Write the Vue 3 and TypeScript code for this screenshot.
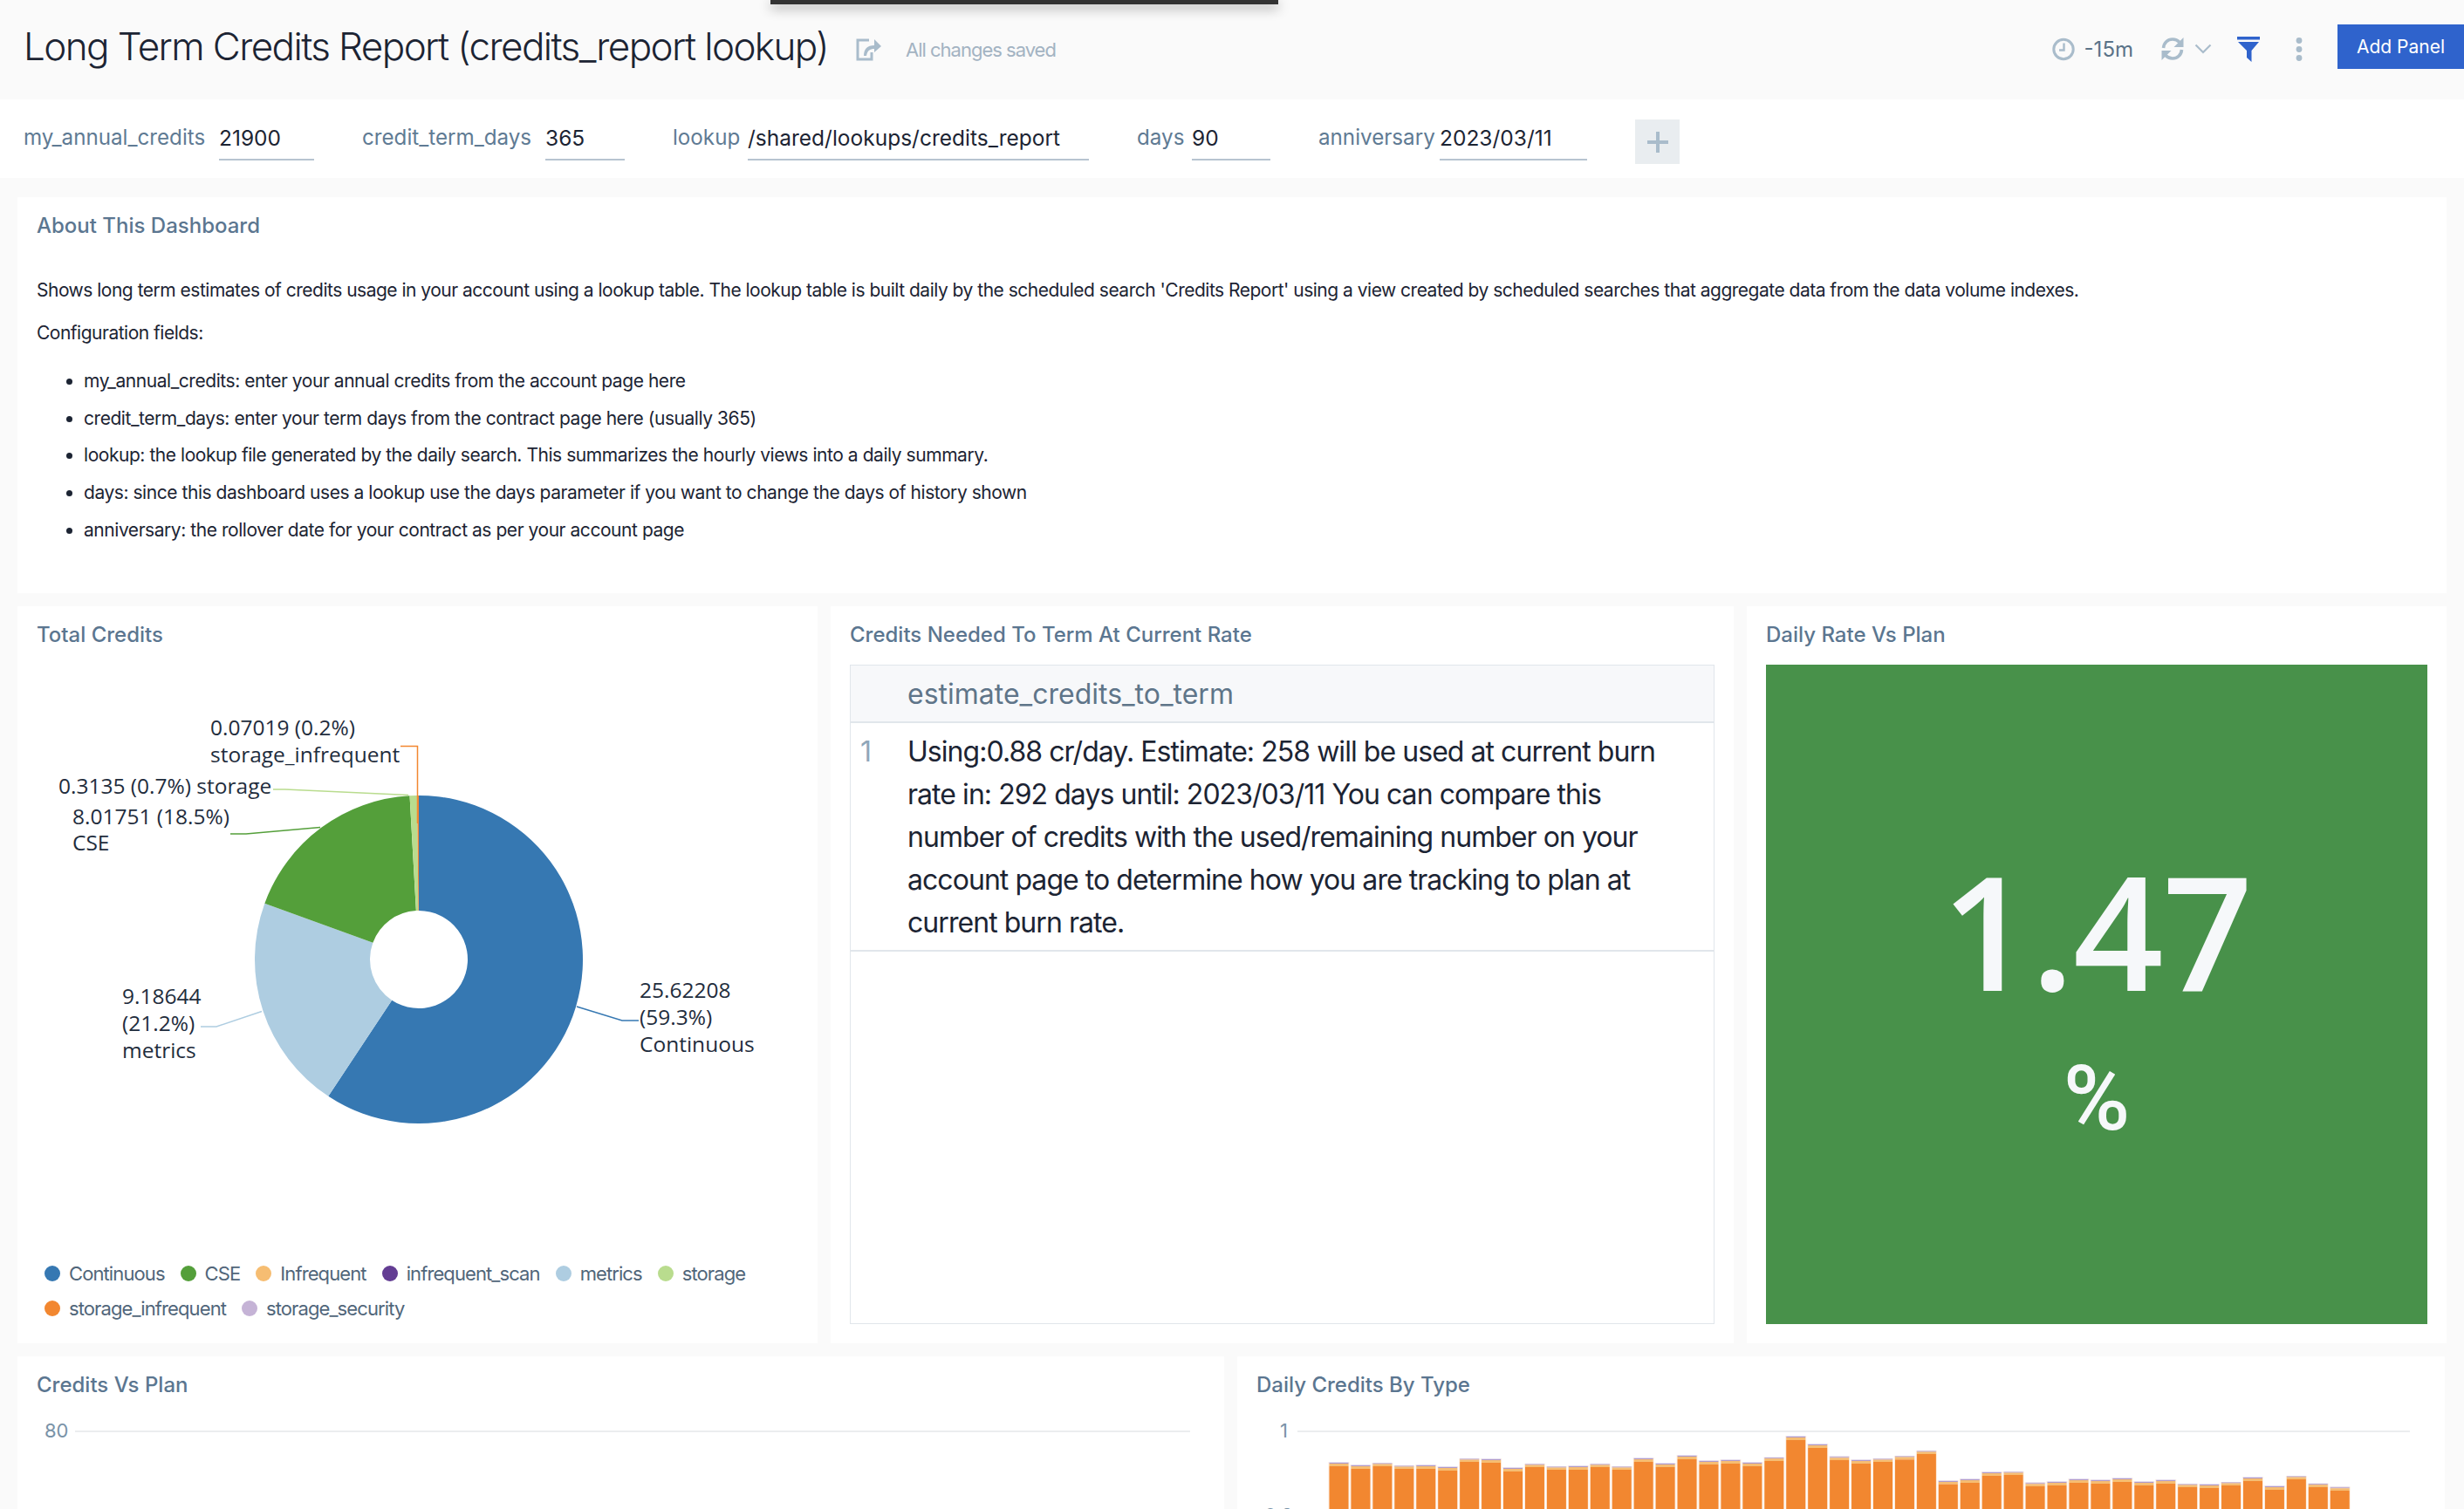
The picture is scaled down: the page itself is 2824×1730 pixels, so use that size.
<template>
  <div class="page">
    <div class="top-sheet"></div>
    <header class="head">
      <h1 class="title">Long Term Credits Report (credits_report lookup)</h1>
      <svg class="share" width="30" height="26" viewBox="0 0 30 26">
        <path d="M15 2H2v22h16v-8" fill="none" stroke="#a9bccb" stroke-width="3" />
        <path d="M9 20c0-8 4-12 12-12V1l8 8-8 7v-4c-5 0-8 2-9 8z" fill="#a9bccb" />
      </svg>
      <span class="saved">All changes saved</span>
      <div class="head-right">
        <svg class="ico" width="26" height="27" viewBox="0 0 26 27">
          <circle cx="13" cy="13.5" r="11.2" fill="none" stroke="#a9bccb" stroke-width="3" />
          <path d="M13.5 6.5v8H8" fill="none" stroke="#a9bccb" stroke-width="2.4" />
        </svg>
        <span class="range">-15m</span>
        <svg class="ico refresh" width="26" height="28" viewBox="0 0 26 28">
          <path d="M2.5 13C3 7 7.5 3 13 3c3.400 0 6 1.300 8 3.500" fill="none" stroke="#a9bccb" stroke-width="3.600" />
          <path d="M25.500 1v11h-11z" fill="#a9bccb" />
          <path d="M23.500 15c-.5 6-5 10-10.500 10-3.400 0-6-1.300-8-3.500" fill="none" stroke="#a9bccb" stroke-width="3.600" />
          <path d="M.5 27V16h11z" fill="#a9bccb" />
        </svg>
        <svg class="ico chev" width="20" height="12" viewBox="0 0 20 12">
          <path d="M1.500 1.500 10 10l8.500-8.500" fill="none" stroke="#a9bccb" stroke-width="2.200" />
        </svg>
        <svg class="ico funnel" width="26" height="29" viewBox="0 0 26 29">
          <path d="M0 0h26v3.500H0z" fill="#2f63cc" />
          <path d="M1 6h24l-8.500 10v13L11 24v-8z" fill="#2f63cc" />
        </svg>
        <svg class="ico dots" width="8" height="27" viewBox="0 0 8 27">
          <circle cx="4" cy="3.500" r="3.400" fill="#a9bccb" />
          <circle cx="4" cy="13.500" r="3.400" fill="#a9bccb" />
          <circle cx="4" cy="23.500" r="3.400" fill="#a9bccb" />
        </svg>
        <button type="button" class="add-btn">Add Panel</button>
      </div>
    </header>

    <div class="params">
      <label v-for="p in params" :key="p.name" class="param">
        <span class="param-name" :style="{ width: p.nameWidth + 'px' }">{{ p.name }}</span>
        <input class="param-input" :style="{ width: p.width + 'px' }" :value="p.value" readonly />
      </label>
      <button type="button" class="param-add">
        <svg width="24" height="24" viewBox="0 0 24 24">
          <path d="M0 10h10V0h4v10h10v4H14v10h-4V14H0z" fill="#a9bccb" />
        </svg>
      </button>
    </div>

    <main class="board">
      <section class="panel about">
        <h2 class="panel-title">About This Dashboard</h2>
        <p class="about-text first">
          Shows long term estimates of credits usage in your account using a lookup table. The lookup table is built daily by the scheduled search 'Credits Report' using a view created by scheduled searches that aggregate data from the data volume indexes.
        </p>
        <p class="about-text">Configuration fields:</p>
        <ul class="about-list">
          <li>my_annual_credits: enter your annual credits from the account page here</li>
          <li>credit_term_days: enter your term days from the contract page here (usually 365)</li>
          <li>lookup: the lookup file generated by the daily search. This summarizes the hourly views into a daily summary.</li>
          <li>days: since this dashboard uses a lookup use the days parameter if you want to change the days of history shown</li>
          <li>anniversary: the rollover date for your contract as per your account page</li>
        </ul>
      </section>

      <div class="row-mid">
        <section class="panel">
          <h2 class="panel-title">Total Credits</h2>
          <svg class="pie" width="917" height="703" viewBox="20 743 917 703">
            <path v-for="s in slices" :key="s.name" :d="s.d" :fill="s.color" />
            <polyline v-for="l in leaders" :key="l.points" :points="l.points" fill="none" :stroke="l.color" stroke-width="1.500" />
            <text v-for="t in pieLabels" :key="t.text" class="pie-label" :x="t.x" :y="t.y">{{ t.text }}</text>
          </svg>
          <ul class="legend">
            <li v-for="l in legend" :key="l.name" class="legend-item">
              <i class="legend-dot" :style="{ background: l.color }"></i>{{ l.name }}
            </li>
          </ul>
        </section>

        <section class="panel">
          <h2 class="panel-title">Credits Needed To Term At Current Rate</h2>
          <div class="table-box">
            <table class="result">
              <thead>
                <tr><th class="col-n"></th><th>estimate_credits_to_term</th></tr>
              </thead>
              <tbody>
                <tr>
                  <td class="col-n idx">1</td>
                  <td>Using:0.88 cr/day. Estimate: 258 will be used at current burn rate in: 292 days until: 2023/03/11 You can compare this number of credits with the used/remaining number on your account page to determine how you are tracking to plan at current burn rate.</td>
                </tr>
              </tbody>
            </table>
          </div>
        </section>

        <section class="panel">
          <h2 class="panel-title">Daily Rate Vs Plan</h2>
          <div class="stat">
            <div class="stat-num">1.47</div>
            <div class="stat-unit">%</div>
          </div>
        </section>
      </div>

      <div class="row-bottom">
        <section class="panel">
          <h2 class="panel-title">Credits Vs Plan</h2>
          <svg class="chart" width="1383" height="120" viewBox="20 1610 1383 120">
            <text class="axis" x="51" y="1648">80</text>
            <path d="M86 1641H1364" stroke="#ebedef" stroke-width="2" />
          </svg>
        </section>
        <section class="panel">
          <h2 class="panel-title">Daily Credits By Type</h2>
          <svg class="chart" width="1384" height="120" viewBox="1418 1610 1384 120">
            <text class="axis" x="1467" y="1648">1</text>
            <text class="axis" x="1449" y="1745">0.8</text>
            <path d="M1487 1641H2762" stroke="#ebedef" stroke-width="2" />
            <g v-for="b in bars" :key="b.x">
              <rect :x="b.x - 1" :y="b.top" width="24" :height="1730 - b.top" fill="#fdeee0" />
              <rect :x="b.x" :y="b.top" width="22" :height="b.topH" fill="#e4dcee" />
              <rect :x="b.x" :y="b.top + b.topH" width="22" height="1" fill="#b09ac8" />
              <rect :x="b.x" :y="b.top + b.topH + 1" width="22" :height="b.lightH" fill="#f6bd72" />
              <rect :x="b.x" :y="b.orangeTop" width="22" :height="1730 - b.orangeTop" fill="#f28730" />
            </g>
          </svg>
        </section>
      </div>
    </main>
  </div>
</template>

<script setup lang="ts">
const params = [
  { name: 'my_annual_credits', nameWidth: 213, value: '21900', width: 109 },
  { name: 'credit_term_days', nameWidth: 199, value: '365', width: 91 },
  { name: 'lookup', nameWidth: 75, value: '/shared/lookups/credits_report', width: 391 },
  { name: 'days', nameWidth: 52, value: '90', width: 90 },
  { name: 'anniversary', nameWidth: 128, value: '2023/03/11', width: 169 }
]

const cx = 480
const cy = 1100
const outer = 188
const inner = 56

const pieData = [
  { name: 'Continuous', value: 25.62208, color: '#3678b2' },
  { name: 'metrics', value: 9.18644, color: '#aecde1' },
  { name: 'CSE', value: 8.01751, color: '#549f3a' },
  { name: 'storage', value: 0.3135, color: '#b9dc8e' },
  { name: 'storage_infrequent', value: 0.07019, color: '#f28730' }
]
const total = pieData.reduce((sum, d) => sum + d.value, 0)

function point(r: number, a: number) {
  return `${(cx + r * Math.sin(a)).toFixed(2)} ${(cy - r * Math.cos(a)).toFixed(2)}`
}

let acc = 0
const slices = pieData.map((d) => {
  const a0 = (acc / total) * Math.PI * 2
  acc += d.value
  const a1 = (acc / total) * Math.PI * 2
  const large = a1 - a0 > Math.PI ? 1 : 0
  return {
    name: d.name,
    color: d.color,
    d: `M${point(outer, a0)}A${outer} ${outer} 0 ${large} 1 ${point(outer, a1)}L${point(inner, a1)}A${inner} ${inner} 0 ${large} 0 ${point(inner, a0)}Z`
  }
})

const leaders = [
  { color: '#f28730', points: '459,855.5 478.500,855.500 478.500,944' },
  { color: '#b9dc8e', points: '313,905 327,905 468,911.500' },
  { color: '#549f3a', points: '264,956 282,956 367,948.500' },
  { color: '#aecde1', points: '230,1177 248,1177 300,1159.500' },
  { color: '#3678b2', points: '732,1170 713,1170 661,1154' }
]

const pieLabels = [
  { text: '0.07019 (0.2%)', x: 241, y: 843 },
  { text: 'storage_infrequent', x: 241, y: 874 },
  { text: '0.3135 (0.7%) storage', x: 67, y: 910 },
  { text: '8.01751 (18.5%)', x: 83, y: 945 },
  { text: 'CSE', x: 83, y: 975 },
  { text: '9.18644', x: 140, y: 1151 },
  { text: '(21.2%)', x: 140, y: 1182 },
  { text: 'metrics', x: 140, y: 1213 },
  { text: '25.62208', x: 733, y: 1144 },
  { text: '(59.3%)', x: 733, y: 1175 },
  { text: 'Continuous', x: 733, y: 1206 }
]

const legend = [
  { name: 'Continuous', color: '#3678b2' },
  { name: 'CSE', color: '#549f3a' },
  { name: 'Infrequent', color: '#f6bd72' },
  { name: 'infrequent_scan', color: '#633d93' },
  { name: 'metrics', color: '#aecde1' },
  { name: 'storage', color: '#b9dc8e' },
  { name: 'storage_infrequent', color: '#f28730' },
  { name: 'storage_security', color: '#c5b3d6' }
]

// values read off the reference: y of the orange part and of the whole stack
const orangeTops = [423, 432, 423, 432, 432, 438, 408, 411, 441, 426, 435, 435, 426, 435, 408, 426, 399, 417, 414, 423, 405, 333, 360, 402, 414, 408, 400, 381, 485, 480, 456, 453, 492, 489, 480, 483, 477, 489, 483, 495, 498, 489, 474, 504, 468, 495, 507]
const stackTops = [408, 417, 411, 420, 417, 423, 396, 396, 426, 414, 423, 420, 414, 423, 393, 411, 384, 402, 399, 408, 392, 318, 345, 388, 399, 396, 387, 369, 471, 465, 441, 441, 478, 474, 465, 468, 462, 474, 468, 483, 483, 477, 459, 489, 456, 482, 493]

const bars = orangeTops.map((t, i) => {
  const orangeTop = 1540 + t / 3
  const top = 1540 + stackTops[i] / 3
  const band = orangeTop - top
  const topH = band > 4.500 ? 1 : 0.500
  return {
    x: 1523.500 + i * 24.940,
    top,
    topH,
    lightH: Math.max(band - topH - 1, 0),
    orangeTop
  }
})
</script>

<style>
html,
body {
  margin: 0;
  background: #fafafa;
}
</style>

<style scoped>
.page {
  position: relative;
  width: 2824px;
  height: 1730px;
  overflow: hidden;
  background: #fafafa;
  font-family: Inter, "Liberation Sans", sans-serif;
  color: #1c2433;
}

.top-sheet {
  position: absolute;
  left: 883px;
  top: 0;
  width: 582px;
  height: 5px;
  background: #333;
  box-shadow: 0 4px 14px rgba(0, 0, 0, 0.45);
}

.head {
  height: 114px;
  display: flex;
  align-items: center;
  padding-left: 27px;
  box-sizing: border-box;
}

.title {
  margin: -8px 0 0;
  font-size: 44px;
  font-weight: 300;
  letter-spacing: -1.6px;
  white-space: nowrap;
}

.share {
  margin-left: 32px;
}

.saved {
  margin-left: 27px;
  font-size: 22px;
  letter-spacing: -1px;
  color: #a3b3c2;
}

.head-right {
  margin-left: auto;
  padding-bottom: 2px;
  display: flex;
  align-items: center;
}

.range {
  margin: 0 32px 0 11px;
  font-size: 24px;
  color: #5a7388;
}

.chev {
  margin-left: 12px;
}

.funnel {
  margin-left: 29px;
}

.dots {
  margin-left: 41px;
}

.add-btn {
  margin: 0 0 5px 40px;
  width: 145px;
  height: 51px;
  padding: 0;
  border: 0;
  background: #2f63cc;
  color: #fff;
  font: 21px Inter, "Liberation Sans", sans-serif;
}

.params {
  height: 90px;
  background: #fff;
  display: flex;
  align-items: flex-start;
  gap: 55px;
  padding: 23px 0 0 27px;
  box-sizing: border-box;
}

.param {
  display: flex;
  align-items: flex-start;
  gap: 11px;
}

.param-name {
  font-size: 24.200px;
  line-height: 42px;
  color: #5f7b94;
  white-space: nowrap;
}

.param-input {
  height: 47px;
  box-sizing: border-box;
  padding: 0 0 4px;
  border: 0;
  border-bottom: 2px solid #b7c4d0;
  outline: 0;
  background: transparent;
  font: 24.500px Inter, "Liberation Sans", sans-serif;
  color: #1c2433;
}

.param-add {
  width: 51px;
  height: 51px;
  padding: 0;
  border: 0;
  background: #e9edf0;
  display: flex;
  align-items: center;
  justify-content: center;
}

.board {
  padding: 22px 20px 0;
  display: flex;
  flex-direction: column;
  gap: 15px;
}

.panel {
  background: #fff;
  padding: 18px 22px 22px;
  box-sizing: border-box;
  min-width: 0;
}

.panel-title {
  margin: 0;
  font-size: 24px;
  line-height: 30px;
  font-weight: 500;
  color: #5b7690;
}

.about {
  height: 454px;
}

.about-text {
  margin: 0;
  font-size: 21px;
  line-height: 28px;
  letter-spacing: -0.5px;
  white-space: nowrap;
}

.about-text.first {
  margin-top: 45px;
  margin-bottom: 21px;
}

.about-list {
  margin: 27px 0 0;
  padding: 0 0 0 54px;
  font-size: 21px;
  line-height: 28px;
  letter-spacing: -0.45px;
}

.about-list li {
  margin-bottom: 14.700px;
}

.row-mid {
  display: grid;
  grid-template-columns: 917px 1035px 802px;
  gap: 15px;
  height: 845px;
}

.pie {
  display: block;
  margin: 0 -22px;
}

.pie-label {
  font-family: "Open Sans", sans-serif;
  font-size: 24.500px;
  fill: #1f2d3d;
}

.legend {
  list-style: none;
  margin: 0;
  padding: 0 0 0 9px;
  display: flex;
  flex-wrap: wrap;
  gap: 12px 18px;
}

.legend-item {
  display: flex;
  align-items: center;
  font-size: 22px;
  line-height: 28px;
  letter-spacing: -0.9px;
  color: #51667a;
}

.legend-dot {
  width: 18px;
  height: 18px;
  border-radius: 50%;
  margin-right: 10px;
}

.table-box {
  margin-top: 19px;
  height: 756px;
  box-sizing: border-box;
  border: 1px solid #e1e6eb;
}

.result {
  width: 100%;
  border-collapse: collapse;
  font-size: 32px;
  line-height: 49px;
}

.result th {
  height: 64px;
  padding: 0;
  background: #f7f8fa;
  border-bottom: 2px solid #e1e6eb;
  text-align: left;
  font-weight: 400;
  color: #5f7589;
}

.result td {
  padding: 8px 40px 7px 0;
  border-bottom: 2px solid #e1e6eb;
  vertical-align: top;
  letter-spacing: -0.95px;
}

.result .col-n {
  width: 65px;
  padding-right: 0;
}

.result .idx {
  padding-left: 11px;
  box-sizing: border-box;
  color: #8fa6b9;
}

.stat {
  margin-top: 19px;
  height: 756px;
  background: #48914a;
  color: #f6f8fa;
  text-align: center;
  overflow: hidden;
}

.stat-num {
  margin-top: 197px;
  font-family: "Open Sans", sans-serif;
  font-size: 181px;
  line-height: 215px;
  font-weight: 600;
  letter-spacing: -1px;
}

.stat-unit {
  margin-top: 36px;
  font-family: Roboto, sans-serif;
  font-size: 104px;
  line-height: 100px;
  font-weight: 500;
}

.row-bottom {
  display: grid;
  grid-template-columns: 1383px 1384px;
  gap: 15px;
}

.row-bottom .panel {
  height: 175px;
  padding-bottom: 0;
}

.chart {
  display: block;
  margin: 7px -22px 0;
}

.axis {
  font-family: Inter, "Liberation Sans", sans-serif;
  font-size: 22px;
  fill: #7a93a8;
}
</style>
